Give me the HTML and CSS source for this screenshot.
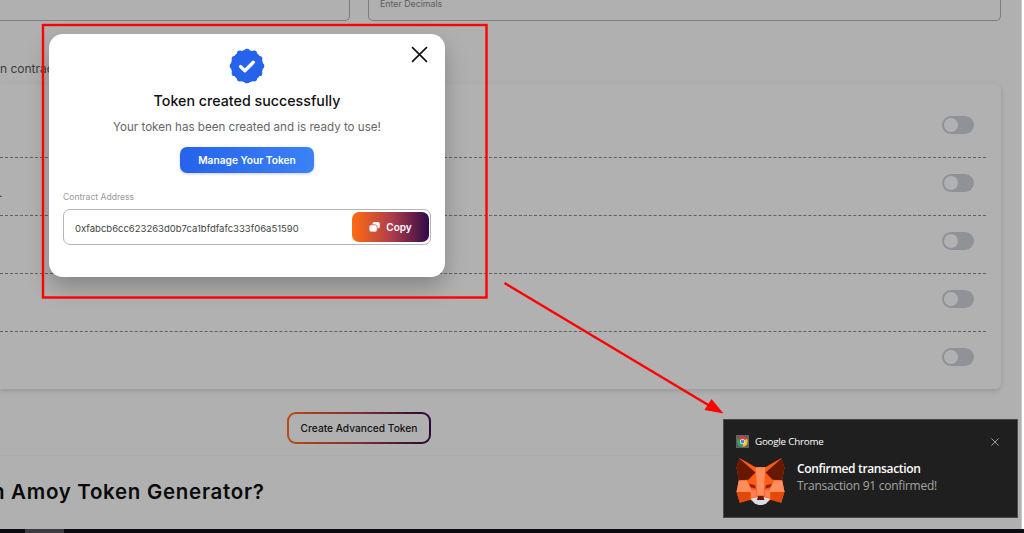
FILE: index.html
```
<!DOCTYPE html>
<html lang="en">
<head>
    <meta charset="UTF-8">
    <meta name="viewport" content="width=device-width, initial-scale=1.0">
    <title>Token Generator</title>
    <link rel="stylesheet" href="styles.css">
</head>
<body>
    <main class="page">
        <div class="fields">
            <div class="field"></div>
            <div class="field">Enter Decimals</div>
        </div>

        <p class="intro">n contract</p>

        <section class="options">
            <div class="option"><span></span><span class="toggle"></span></div>
            <div class="option"><span class="option-text">.</span><span class="toggle"></span></div>
            <div class="option"><span></span><span class="toggle"></span></div>
            <div class="option"><span></span><span class="toggle"></span></div>
            <div class="option"><span></span><span class="toggle"></span></div>
        </section>

        <button class="create-btn">Create Advanced Token</button>

        <section class="about">
            <h2>n Amoy Token Generator?</h2>
        </section>
    </main>
    <footer class="taskbar"><span class="task"></span></footer>

    <div class="modal">
        <svg class="close" viewBox="0 0 16 16"><path d="M1 1l14 14M15 1L1 15"/></svg>
        <svg class="badge" viewBox="0 0 36 36">
            <circle cx="18" cy="18" r="16.1" fill="#2563eb"/>
            <circle cx="18" cy="18" r="14.4" fill="none" stroke="#2563eb" stroke-width="5.8" stroke-linecap="round" pathLength="12" stroke-dasharray="0 1"/>
            <path d="M11.6 18.6l4.3 4.2 8.4-8.6" fill="none" stroke="#fff" stroke-width="3.4" stroke-linecap="round" stroke-linejoin="round"/>
        </svg>
        <h3>Token created successfully</h3>
        <p class="message">Your token has been created and is ready to use!</p>
        <button class="manage-btn">Manage Your Token</button>
        <label>Contract Address</label>
        <div class="address">
            <span>0xfabcb6cc623263d0b7ca1bfdfafc333f06a51590</span>
            <button class="copy-btn">
                <svg viewBox="0 0 11 10">
                    <rect x="3.5" y="0" width="7.3" height="6.5" rx="2" fill="#fff"/>
                    <rect x="0" y="2.8" width="8.2" height="7.2" rx="2" fill="#fff" stroke="#bd4544" stroke-width=".7"/>
                </svg>
                Copy
            </button>
        </div>
    </div>

    <svg class="marks" viewBox="0 0 1024 533">
        <rect x="43" y="25" width="443.5" height="272.5" fill="none" stroke="#f00" stroke-width="2.4"/>
        <path d="M504.500 283L710 406" stroke="#f00" stroke-width="2.4"/>
        <path d="M723.500 413.500L711.500 399L704.500 410z" fill="#f00"/>
    </svg>

    <div class="toast">
        <div class="toast-head">
            <svg class="chrome" viewBox="0 0 13 13">
                <rect width="13" height="13" fill="#5f6368"/>
                <path d="M6.500 6.500L1.900 3.800A5.300 5.300 0 0 1 11.100 3.800z" fill="#e33b2e"/>
                <path d="M6.500 6.500L11.100 3.800A5.300 5.300 0 0 1 6.500 11.800z" fill="#fbc116"/>
                <path d="M6.500 6.500V11.800A5.300 5.300 0 0 1 1.900 3.800z" fill="#2da94f"/>
                <circle cx="6.500" cy="6.500" r="2.500" fill="#fff"/>
                <circle cx="6.500" cy="6.500" r="1.900" fill="#4285f4"/>
            </svg>
            <span>Google Chrome</span>
            <svg class="toast-close" viewBox="0 0 8 8"><path d="M.4.4l7.200 7.200M7.600.4L.4 7.600"/></svg>
        </div>
        <div class="toast-body">
            <svg class="fox" viewBox="0 0 145 142">
                <path d="M9 0L58 28H87L136 0L145 30L138 66L145 102L135 135L103 126L88 138H57L42 126L10 135L0 102L7 66L0 30z" fill="#ff5c16"/>
                <path d="M8 1L0 30L7 67L36 66L57 44z" fill="#661800"/>
                <path d="M137 1L145 30L138 67L109 66L88 44z" fill="#661800"/>
                <path d="M58 28H87L82 116H63z" fill="#ff8d5d"/>
                <path d="M7 68H31L46 98V106L0 103z" fill="#ff8d5d"/>
                <path d="M138 68H114L99 98V106L145 103z" fill="#ff8d5d"/>
                <path d="M0 103H43V124L10 135z" fill="#e34807"/>
                <path d="M145 103H102V124L135 135z" fill="#e34807"/>
                <path d="M38 78L56 82L58 92L43 88z" fill="#8a2405"/>
                <path d="M107 78L89 82L87 92L102 88z" fill="#8a2405"/>
                <path d="M44 98L60 96V116L43 122z" fill="#ff8055"/>
                <path d="M101 98L85 96V116L102 122z" fill="#ff8055"/>
                <path d="M43 123L64 118H81L102 123L89 138L78 142H67L56 138z" fill="#d9dde8"/>
                <path d="M65 114H81L84 127H62z" fill="#661800"/>
            </svg>
            <div class="toast-text">
                <strong>Confirmed transaction</strong>
                <p>Transaction 91 confirmed!</p>
            </div>
        </div>
    </div>
</body>
</html>
```
FILE: styles.css
```
* {
    box-sizing: border-box;
}

body {
    margin: 0;
    width: 1024px;
    height: 533px;
    overflow: hidden;
    position: relative;
    background: #fff;
    font-family: Inter, sans-serif;
}

h2, h3, p {
    margin: 0;
}

button {
    font-family: inherit;
    padding: 0;
}

.page {
    width: 1022px;
    height: 529px;
    overflow: hidden;
    background: #b0b0b0;
    border-right: 1px solid #c8c8c8;
    padding-right: 20px;
}

.fields {
    display: grid;
    grid-template-columns: 350px 633px;
    gap: 18px;
    height: 21px;
}

.field {
    height: 21px;
    border: 1px solid #7c7f7c;
    border-top: none;
    border-radius: 0 0 5px 5px;
    padding-left: 11px;
    font-size: 8.8px;
    line-height: 8px;
    color: #5c5e61;
}

.field:first-child {
    border-left: none;
    border-radius: 0 0 5px 0;
}

.intro {
    margin-top: 40px;
    height: 23px;
    font-size: 12px;
    line-height: 16px;
    color: #3a3a3a;
}

.options {
    height: 305px;
    padding: 16px 15px 0 0;
    border-radius: 0 6px 6px 0;
    background: #b1b1b1;
    box-shadow: 0 2px 5px rgba(0, 0, 0, 0.14);
}

.option {
    display: flex;
    align-items: center;
    justify-content: space-between;
    height: 58px;
    padding: 0 12px 8px 0;
    border-bottom: 1px dashed #606060;
}

.option:last-child {
    border-bottom: none;
}

.option-text {
    margin-left: -1px;
    padding-top: 20px;
    font-size: 12px;
    color: #3a3a3a;
}

.toggle {
    width: 32px;
    height: 18px;
    padding: 2px;
    border-radius: 9px;
    background: #8f9297;
}

.toggle::before {
    content: "";
    display: block;
    width: 14px;
    height: 14px;
    border-radius: 50%;
    background: #b1b1b1;
}

.create-btn {
    display: block;
    width: 144px;
    height: 32px;
    margin: 23px 0 0 287px;
    border: 2px solid transparent;
    border-radius: 9px;
    background: linear-gradient(#b0b0b0, #b0b0b0) padding-box, linear-gradient(90deg, #b84d12, #7b2f35 50%, #2a0736) border-box;
    color: #111;
    font-size: 10.2px;
    font-weight: 500;
    white-space: nowrap;
}

.about {
    margin-top: 11px;
    padding-top: 23px;
    border-top: 1px solid #acacac;
}

.about h2 {
    margin-left: -8px;
    font-size: 20.5px;
    line-height: 26px;
    font-weight: 600;
    letter-spacing: 0.7px;
    color: #0a0a0a;
    white-space: nowrap;
}

.taskbar {
    height: 4px;
    padding-left: 25px;
    background: #0b0b10;
}

.task {
    display: block;
    width: 39px;
    height: 4px;
    background: #3b3b40;
}

.modal {
    position: absolute;
    left: 49px;
    top: 34px;
    width: 396px;
    height: 243px;
    padding: 14px 14px 0;
    display: flex;
    flex-direction: column;
    align-items: center;
    border-radius: 14px;
    background: #fff;
    box-shadow: 0 10px 22px rgba(0, 0, 0, 0.25);
}

.close {
    position: absolute;
    right: 17px;
    top: 12px;
    width: 17px;
    height: 17px;
    stroke: #111;
    stroke-width: 1.5;
}

.badge {
    width: 36px;
    height: 36px;
}

.modal h3 {
    margin-top: 7px;
    font-size: 14.25px;
    line-height: 20px;
    font-weight: 500;
    color: #111;
}

.message {
    margin-top: 7px;
    font-size: 11.6px;
    line-height: 18px;
    color: #666;
}

.manage-btn {
    width: 134px;
    height: 26px;
    margin-top: 11px;
    border: none;
    border-radius: 7px;
    background: linear-gradient(90deg, #2563eb, #3b82f6);
    box-shadow: 0 1px 3px rgba(0, 0, 0, 0.2);
    color: #fff;
    font-size: 10.2px;
    font-weight: 600;
}

.modal label {
    align-self: flex-start;
    margin-top: 18px;
    font-size: 8.6px;
    line-height: 12px;
    color: #999;
}

.address {
    display: flex;
    align-items: center;
    justify-content: space-between;
    width: 368px;
    height: 36px;
    margin-top: 6px;
    padding: 0 1px 0 11px;
    border: 1px solid #b5b5b5;
    border-radius: 7px;
    font-size: 9.5px;
    color: #444;
}

.address span {
    padding-top: 2px;
}

.copy-btn {
    display: flex;
    align-items: center;
    justify-content: center;
    gap: 6px;
    width: 77px;
    height: 30px;
    border: none;
    border-radius: 7px;
    background: linear-gradient(90deg, #ff6b12, #b13e4a 50%, #300a48);
    color: #fff;
    font-size: 10px;
    font-weight: 600;
}

.copy-btn svg {
    width: 11px;
    height: 10px;
}

/* red frame and arrow over the page */
.marks {
    position: absolute;
    left: 0;
    top: 0;
    width: 1024px;
    height: 533px;
}

.toast {
    position: absolute;
    left: 723px;
    top: 419px;
    width: 295px;
    height: 99px;
    padding: 15px 18px 0 12px;
    border: 1px solid #4a4a4a;
    background: #1f1f1f;
    font-family: "Open Sans", sans-serif;
}

.toast-head {
    display: flex;
    align-items: center;
    height: 13px;
    color: #fff;
    font-size: 9.8px;
    letter-spacing: -0.22px;
}

.chrome {
    width: 13px;
    height: 13px;
    margin-right: 6px;
}

.toast-close {
    width: 8px;
    height: 8px;
    margin-left: auto;
    stroke: #aaa;
    stroke-width: 0.9;
}

.toast-body {
    display: flex;
    gap: 12px;
    margin-top: 10px;
}

.fox {
    width: 49px;
    height: 47px;
}

.toast-text {
    padding-top: 2px;
    font-size: 12px;
    line-height: 17px;
    letter-spacing: -0.25px;
    color: #a5a5a5;
    white-space: nowrap;
}

.toast-text strong {
    font-weight: 600;
    letter-spacing: -0.34px;
    color: #fff;
}
```
